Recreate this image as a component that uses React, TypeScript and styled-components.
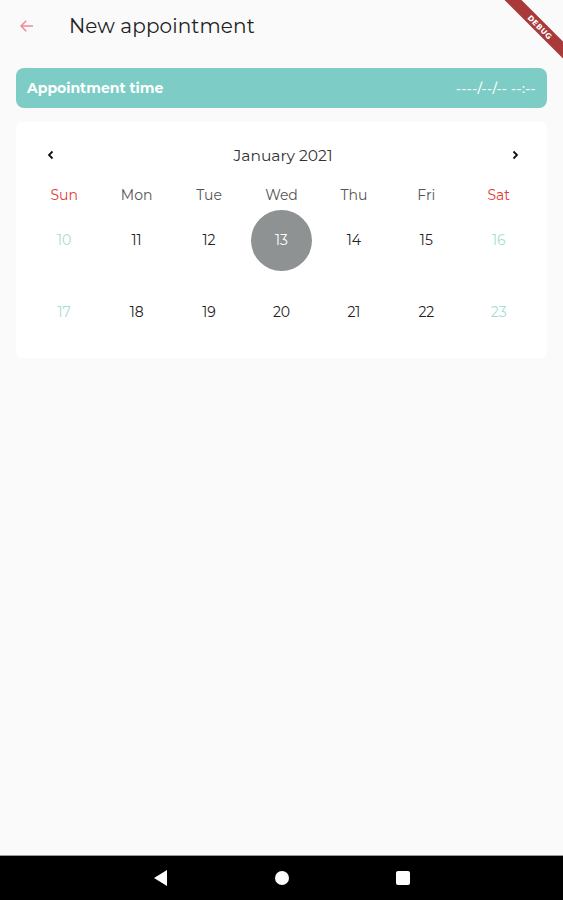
import styled, { createGlobalStyle } from 'styled-components';

const GlobalStyle = createGlobalStyle`
  html, body {
    margin: 0;
    padding: 0;
    background: #fafafa;
  }
  * {
    box-sizing: border-box;
  }
`;

const WEEKDAYS = ['Sun', 'Mon', 'Tue', 'Wed', 'Thu', 'Fri', 'Sat'];
const WEEKS = [
  [10, 11, 12, 13, 14, 15, 16],
  [17, 18, 19, 20, 21, 22, 23],
];
const SELECTED = 13;

export default function App() {
  return (
    <>
      <GlobalStyle />
      <S.Screen>
        <S.DebugBanner>
          <span>DEBUG</span>
        </S.DebugBanner>
        <S.Content>
          <S.Header>
            <S.BackButton aria-label='back'>
              <svg width='18' height='18' viewBox='0 0 24 24' fill='none'>
                <path d='M20 12H4M11 5l-7 7 7 7' stroke='#f0889a' strokeWidth='2' />
              </svg>
            </S.BackButton>
            <S.Title>New appointment</S.Title>
          </S.Header>

          <S.TimeBar>
            <S.TimeLabel>Appointment time</S.TimeLabel>
            <S.TimeValue>----/--/-- --:--</S.TimeValue>
          </S.TimeBar>

          <S.Calendar>
            <S.MonthRow>
              <S.Chevron aria-label='previous month'>
                <svg width='12' height='12' viewBox='0 0 12 12'>
                  <path d='M7.5 2.5L4 6l3.5 3.5' stroke='#111' strokeWidth='1.8' fill='none' />
                </svg>
              </S.Chevron>
              <S.MonthLabel>January 2021</S.MonthLabel>
              <S.Chevron aria-label='next month'>
                <svg width='12' height='12' viewBox='0 0 12 12'>
                  <path d='M4.5 2.5L8 6l-3.5 3.5' stroke='#111' strokeWidth='1.8' fill='none' />
                </svg>
              </S.Chevron>
            </S.MonthRow>

            <S.WeekdayRow>
              {WEEKDAYS.map((d, i) => (
                <S.Weekday key={d} $weekend={i === 0 || i === 6}>
                  {d}
                </S.Weekday>
              ))}
            </S.WeekdayRow>

            {WEEKS.map((week, w) => (
              <S.DayRow key={w}>
                {week.map((day, i) => (
                  <S.DayCell key={day}>
                    <S.Day $weekend={i === 0 || i === 6} $selected={day === SELECTED}>
                      {day}
                    </S.Day>
                  </S.DayCell>
                ))}
              </S.DayRow>
            ))}
          </S.Calendar>
        </S.Content>

        <S.NavBar>
          <svg width='16' height='18' viewBox='0 0 16 18'>
            <path d='M14 1v16L1 9z' fill='#fff' />
          </svg>
          <svg width='16' height='16' viewBox='0 0 16 16'>
            <circle cx='8' cy='8' r='7' fill='#fff' />
          </svg>
          <svg width='16' height='16' viewBox='0 0 16 16'>
            <rect x='1' y='1' width='14' height='14' rx='2' fill='#fff' />
          </svg>
        </S.NavBar>
      </S.Screen>
    </>
  );
}

const S = {
  Screen: styled.div`
    position: relative;
    height: 900px;
    display: flex;
    flex-direction: column;
    overflow: hidden;
    background: #fafafa;
    font-family: 'Montserrat', 'Lato', 'Noto Sans', sans-serif;
  `,

  DebugBanner: styled.div`
    position: absolute;
    top: 21px;
    right: -27px;
    width: 100px;
    height: 12px;
    transform: rotate(45deg);
    background: #a83a3a;
    display: flex;
    align-items: center;
    justify-content: center;

    span {
      color: #fff;
      font-family: 'DejaVu Sans', sans-serif;
      font-size: 7.5px;
      font-weight: 700;
      letter-spacing: 0.3px;
    }
  `,

  Content: styled.div`
    flex: 1;
    display: flex;
    flex-direction: column;
    padding: 0 16px;
  `,

  Header: styled.header`
    height: 52px;
    display: flex;
    align-items: center;
    gap: 32px;
    padding-left: 1px;
  `,

  BackButton: styled.button`
    width: 20px;
    height: 20px;
    padding: 0;
    border: none;
    background: none;
    display: flex;
    align-items: center;
    justify-content: center;
  `,

  Title: styled.h1`
    margin: 0;
    font-size: 20px;
    font-weight: 400;
    color: #222;
    letter-spacing: 0.1px;
  `,

  TimeBar: styled.div`
    margin-top: 16px;
    height: 40px;
    border-radius: 8px;
    background: #7dcdc6;
    display: flex;
    align-items: center;
    justify-content: space-between;
    padding: 0 11px;
    color: #fff;
  `,

  TimeLabel: styled.span`
    font-size: 14px;
    font-weight: 700;
  `,

  TimeValue: styled.span`
    font-size: 13px;
    font-weight: 500;
    letter-spacing: 0.4px;
  `,

  Calendar: styled.section`
    margin-top: 14px;
    background: #fff;
    border-radius: 6px;
    padding: 19px 12px 10px;
  `,

  MonthRow: styled.div`
    height: 28px;
    display: flex;
    align-items: center;
    justify-content: space-between;
    padding: 0 14px 0 17px;
  `,

  Chevron: styled.button`
    width: 12px;
    height: 12px;
    padding: 0;
    border: none;
    background: none;
    display: flex;
  `,

  MonthLabel: styled.span`
    font-size: 15.5px;
    color: #333;
  `,

  WeekdayRow: styled.div`
    margin-top: 17px;
    height: 18px;
    display: grid;
    grid-template-columns: repeat(7, 1fr);
    align-items: center;
  `,

  Weekday: styled.span<{ $weekend: boolean }>`
    text-align: center;
    font-size: 14px;
    color: ${({ $weekend }) => ($weekend ? '#e53935' : '#555')};
  `,

  DayRow: styled.div`
    height: 72px;
    display: grid;
    grid-template-columns: repeat(7, 1fr);
  `,

  DayCell: styled.div`
    display: flex;
    align-items: center;
    justify-content: center;
  `,

  Day: styled.span<{ $weekend: boolean; $selected: boolean }>`
    width: 61px;
    height: 61px;
    border-radius: 50%;
    display: flex;
    align-items: center;
    justify-content: center;
    font-size: 14px;
    background: ${({ $selected }) => ($selected ? '#8e9292' : 'transparent')};
    color: ${({ $weekend, $selected }) => ($selected ? '#fff' : $weekend ? '#a6ddd7' : '#222')};
  `,

  NavBar: styled.nav`
    height: 45px;
    background: #000;
    border-top: 1px solid #9a9a9a;
    display: flex;
    align-items: center;
    justify-content: center;
    gap: 105px;
  `,
};
